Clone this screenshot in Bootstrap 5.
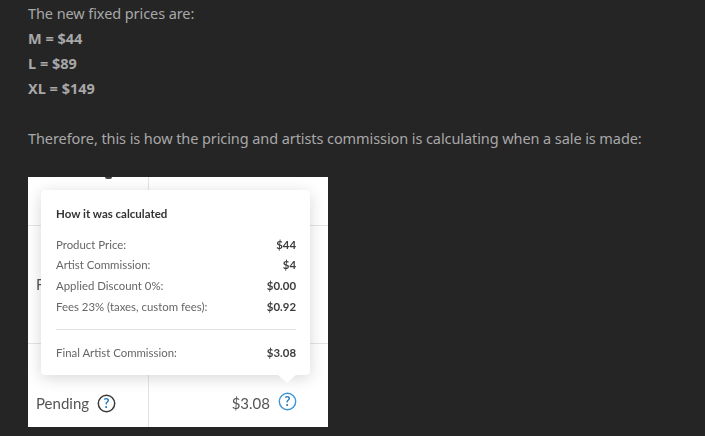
<!DOCTYPE html>
<html lang="en">
<head>
    <meta charset="UTF-8">
    <meta name="viewport" content="width=device-width, initial-scale=1.0">
    <title>New fixed prices</title>
    <link rel="stylesheet" href="https://cdn.jsdelivr.net/npm/bootstrap@5.3.0/dist/css/bootstrap.min.css">
    <style>
        body {
            background-color: #252525;
            color: #a8a8a8;
            font-family: "Noto Sans", sans-serif;
            font-size: 14.5px;
            line-height: 25px;
            overflow: hidden;
        }
        .post-body {
            padding: 1px 0 0 28px;
        }
        .plain-line {
            letter-spacing: -.085px;
        }
        .price-line {
            font-weight: 700;
        }
        .gap-line {
            margin-top: 25px;
            margin-bottom: 26px;
        }
        .shot {
            position: relative;
            width: 300px;
            height: 250px;
            background-color: #fff;
            overflow: hidden;
            color: #555;
            font-family: "Lato", sans-serif;
            filter: blur(0.35px);
            display: grid;
            grid-template-columns: 121px 179px;
            grid-template-rows: 49px 118px 83px;
        }
        .shot-cell {
            border-bottom: 1px solid #e4e4e4;
            border-right: 1px solid #e4e4e4;
            padding-left: 8px;
            font-size: 15px;
        }
        .shot-cell.last-col { border-right: 0; }
        .shot-cell.last-row { border-bottom: 0; padding-top: 36px; }
        .cut-tail {
            width: 7px;
            height: 2px;
            margin-left: 69px;
            background-color: #444;
            border-radius: 0 0 4px 4px;
        }
        .shot-value {
            justify-content: flex-end;
            padding-right: 31px;
        }
        .help-dot {
            flex-shrink: 0;
        }
        .calc-pop {
            position: absolute;
            left: 13px;
            top: 13px;
            width: 269px;
            height: 185px;
            background-color: #fff;
            border-radius: 4px;
            box-shadow: 0 3px 16px rgba(0, 0, 0, .16);
            padding: 14px 14px 0 15px;
            font-size: 11.4px;
            line-height: 20.67px;
            color: #666;
        }
        .calc-pop::after {
            content: "";
            position: absolute;
            left: 237px;
            bottom: -8px;
            border-left: 9px solid transparent;
            border-right: 9px solid transparent;
            border-top: 8px solid #fff;
        }
        .calc-title {
            font-weight: 700;
            color: #333;
            margin-bottom: 10px;
            font-size: 11.5px;
        }
        .calc-num {
            font-weight: 700;
            color: #3c3c3c;
        }
        .calc-rule {
            border-top: 1px solid #e2e2e2;
            margin: 12px 0 13px;
        }
    </style>
</head>
<body>
    <div class="post-body">
        <div class="plain-line">The new fixed prices are:</div>
        <div class="price-line">M = $44</div>
        <div class="price-line">L = $89</div>
        <div class="price-line">XL = $149</div>
        <div class="gap-line plain-line">Therefore, this is how the pricing and artists commission is calculating when a sale is made:</div>

        <div class="shot">
            <div class="shot-cell"><div class="cut-tail"></div></div>
            <div class="shot-cell last-col"></div>
            <div class="shot-cell d-flex align-items-center">F</div>
            <div class="shot-cell last-col"></div>
            <div class="shot-cell last-row d-flex align-items-center gap-2">
                <span>Pending</span>
                <svg class="help-dot" width="19" height="19" viewBox="0 0 19 19">
                    <circle cx="9.5" cy="9.5" r="8.2" fill="none" stroke="#3a3a3a" stroke-width="1.5"/>
                    <text x="9.5" y="14" text-anchor="middle" font-size="13" font-weight="700" fill="#2a7fc0">?</text>
                </svg>
            </div>
            <div class="shot-cell last-col last-row shot-value d-flex align-items-center gap-2">
                <span>$3.08</span>
                <svg class="help-dot mb-1" width="19" height="19" viewBox="0 0 19 19">
                    <circle cx="9.5" cy="9.5" r="8.2" fill="none" stroke="#3d95d6" stroke-width="1.4"/>
                    <text x="9.5" y="14" text-anchor="middle" font-size="13" font-weight="700" fill="#2a7fc0">?</text>
                </svg>
            </div>

            <div class="calc-pop">
                <div class="calc-title">How it was calculated</div>
                <div class="d-flex justify-content-between"><span>Product Price:</span><span class="calc-num">$44</span></div>
                <div class="d-flex justify-content-between"><span>Artist Commission:</span><span class="calc-num">$4</span></div>
                <div class="d-flex justify-content-between"><span>Applied Discount 0%:</span><span class="calc-num">$0.00</span></div>
                <div class="d-flex justify-content-between"><span>Fees 23% (taxes, custom fees):</span><span class="calc-num">$0.92</span></div>
                <div class="calc-rule"></div>
                <div class="d-flex justify-content-between"><span>Final Artist Commission:</span><span class="calc-num">$3.08</span></div>
            </div>
        </div>
    </div>
    <script src="https://cdn.jsdelivr.net/npm/bootstrap@5.3.0/dist/js/bootstrap.bundle.min.js"></script>
</body>
</html>
